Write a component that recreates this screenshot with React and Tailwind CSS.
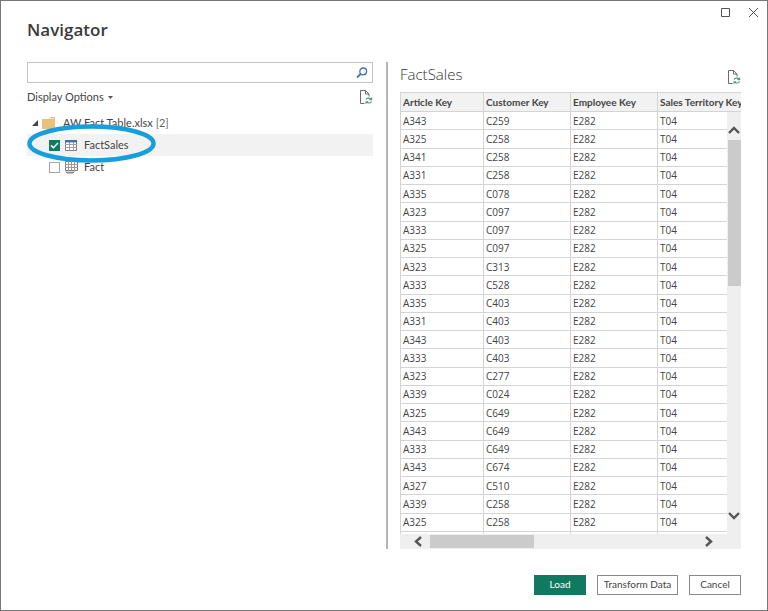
import React, { useState } from 'react';

const COLUMNS = ['Article Key', 'Customer Key', 'Employee Key', 'Sales Territory Key'];

const ROWS = [
  ['A343', 'C259'],
  ['A325', 'C258'],
  ['A341', 'C258'],
  ['A331', 'C258'],
  ['A335', 'C078'],
  ['A323', 'C097'],
  ['A333', 'C097'],
  ['A325', 'C097'],
  ['A323', 'C313'],
  ['A333', 'C528'],
  ['A335', 'C403'],
  ['A331', 'C403'],
  ['A343', 'C403'],
  ['A333', 'C403'],
  ['A323', 'C277'],
  ['A339', 'C024'],
  ['A325', 'C649'],
  ['A343', 'C649'],
  ['A333', 'C649'],
  ['A343', 'C674'],
  ['A327', 'C510'],
  ['A339', 'C258'],
  ['A325', 'C258'],
  ['', ''],
].map(([article, customer]) => (article ? [article, customer, 'E282', 'T04'] : ['', '', '', '']));

const RefreshIcon = () => (
  <svg width="14" height="15" viewBox="0 0 14 15" fill="none" aria-hidden="true">
    <path d="M5.5 13.5H1.500V.5h5L10 4v2.5" stroke="#6a6a6a" />
    <path d="M6.5.5V4H10" stroke="#6a6a6a" />
    <path d="M7 9.6C7.6 8 10.6 7.4 12 9.2M12.6 7.6v2h-2.2" stroke="#4f9a7e" strokeWidth="1.1" />
    <path d="M12.6 11.4c-.6 1.7-3.7 2.2-5 .5M7 13.7v-2h2.2" stroke="#4f9a7e" strokeWidth="1.1" />
  </svg>
);

const SearchIcon = () => (
  <svg width="12" height="12" viewBox="0 0 12 12" fill="none" aria-hidden="true">
    <circle cx="7.2" cy="4.4" r="3.4" stroke="#4573ad" strokeWidth="1.3" />
    <path d="M4.7 6.9L1 10.6" stroke="#4573ad" strokeWidth="2" />
  </svg>
);

const TableIcon = () => (
  <svg width="12" height="11" viewBox="0 0 12 11" fill="none" aria-hidden="true">
    <path d="M.5.5h11v10H.5z" fill="#fff" stroke="#7d7d7d" />
    <path d="M4.5 2v8.5M8.5 2v8.5M0 4.500h12M0 7.500h12" stroke="#a0a0a0" />
    <path d="M0 0h12v2.4H0z" fill="#3f6ea8" />
  </svg>
);

const SheetIcon = () => (
  <svg width="13" height="13" viewBox="0 0 13 13" fill="none" aria-hidden="true">
    <path d="M.5.5h12v9H.5z" stroke="#7a7a7a" />
    <path d="M3.5 0v10M6.5 0v10M9.5 0v10M0 3.5h13M0 6.500h13" stroke="#999" />
    <path d="M1 10.500l1 1.500h6l1.500-1.500" fill="#aaa" stroke="#7a7a7a" />
  </svg>
);

const Chevron = ({ d, wide }) => (
  <svg width={wide ? 12 : 8} height={wide ? 8 : 11} viewBox={wide ? '0 0 12 8' : '0 0 8 11'} fill="none" aria-hidden="true">
    <path d={d} stroke="#555" strokeWidth="2.4" />
  </svg>
);

function TreeItem({ label, icon, checked, onChange, highlighted }) {
  return (
    <li className={`relative flex h-[22px] items-center pl-[22px] ${highlighted ? 'bg-[#f2f2f2]' : ''}`}>
      <label className="flex items-center text-[11px]">
        <input type="checkbox" checked={checked} onChange={onChange} className="peer sr-only" />
        <span className="flex size-[11px] items-center justify-center border border-[#a6a6a6] bg-white peer-checked:border-[#11795f] peer-checked:bg-[#11795f]">
          {checked && (
            <svg width="9" height="9" viewBox="0 0 9 9" fill="none" aria-hidden="true">
              <path d="M1 4.4l2.4 2.4L8 2" stroke="#fff" strokeWidth="1.5" />
            </svg>
          )}
        </span>
        <span className="ml-[3px] flex w-4 justify-center">{icon}</span>
        <span className="ml-[5px]">{label}</span>
      </label>
      {highlighted && (
        <svg className="pointer-events-none absolute -top-2.5 left-0" width="130" height="39" viewBox="0 0 130 39" fill="none" aria-hidden="true">
          <ellipse cx="64.5" cy="19.5" rx="62" ry="17" stroke="#169fdb" strokeWidth="4.5" />
        </svg>
      )}
    </li>
  );
}

function SourcePanel() {
  const [selected, setSelected] = useState({ FactSales: true, Fact: false });
  const toggle = (name) => setSelected((prev) => ({ ...prev, [name]: !prev[name] }));

  return (
    <section className="mr-[13px] min-w-0">
      <div className="flex h-[21px] items-center border border-[#c3c3c3] pr-1">
        <input type="text" aria-label="Search" className="h-full min-w-0 flex-1 px-1 text-[11px] outline-none" />
        <button type="button" aria-label="Search"><SearchIcon /></button>
      </div>
      <div className="mt-1 flex h-5 items-center justify-between">
        <button type="button" className="flex items-center gap-1 text-[11px]">
          Display Options
          <svg width="5" height="3" viewBox="0 0 5 3" aria-hidden="true"><path d="M0 0h5L2.5 3z" fill="#555" /></svg>
        </button>
        <button type="button" aria-label="Refresh"><RefreshIcon /></button>
      </div>
      <div className="mt-[5px] flex h-[22px] items-center pl-[5px] text-[11px]">
        <svg width="6" height="6" viewBox="0 0 6 6" aria-hidden="true"><path d="M6 0v6H0z" fill="#444" /></svg>
        <svg className="ml-1" width="13" height="12" viewBox="0 0 13 12" aria-hidden="true">
          <path d="M0 2h7l1.5-2H13v12H0z" fill="#e9c07c" />
          <path d="M8 1.5h4" stroke="#f6e2bd" />
        </svg>
        <span className="ml-2">AW Fact Table.xlsx <span className="text-[#666]">[2]</span></span>
      </div>
      <ul>
        <TreeItem label="FactSales" icon={<TableIcon />} checked={selected.FactSales} onChange={() => toggle('FactSales')} highlighted />
        <TreeItem label="Fact" icon={<SheetIcon />} checked={selected.Fact} onChange={() => toggle('Fact')} />
      </ul>
    </section>
  );
}

function PreviewPanel() {
  return (
    <section className="flex min-h-0 min-w-0 flex-col border-l-2 border-[#b5b5b5] pl-3">
      <div className="flex h-[30px] items-center justify-between">
        <h2 className="pb-1.5 font-['Open_Sans',sans-serif] text-[15px] font-light text-[#333]">FactSales</h2>
        <button type="button" aria-label="Refresh preview"><RefreshIcon /></button>
      </div>
      <div className="relative min-h-0 flex-1 overflow-hidden">
        <table className="h-[458px] w-[347px] table-fixed border-collapse text-left text-[10px] leading-3">
          <colgroup>
            <col className="w-[83px]" />
            <col className="w-[87px]" />
            <col className="w-[87px]" />
            <col className="w-[90px]" />
          </colgroup>
          <thead>
            <tr className="bg-[#f2f2f2]">
              {COLUMNS.map((name) => (
                <th key={name} className="h-[19px] border border-[#d4d4d4] px-0.5 font-bold whitespace-nowrap">{name}</th>
              ))}
            </tr>
          </thead>
          <tbody className="font-['Open_Sans',sans-serif]">
            {ROWS.map((row, i) => (
              <tr key={i}>
                {row.map((value, j) => (
                  <td key={j} className="h-[18px] border border-[#d4d4d4] px-0.5">{value}</td>
                ))}
              </tr>
            ))}
          </tbody>
        </table>
        <div className="absolute top-5 right-0 bottom-0 flex w-3.5 flex-col items-center bg-[#efefef] py-3.5">
          <button type="button" aria-label="Scroll up"><Chevron wide d="M1 7l5-5 5 5" /></button>
          <div className="mt-1.5 h-[146px] w-[13px] bg-[#cbcbcb]" />
          <button type="button" aria-label="Scroll down" className="mt-auto"><Chevron wide d="M1 1l5 5 5-5" /></button>
        </div>
      </div>
      <div className="flex h-[15px] items-center bg-[#efefef] pr-7 pl-3.5">
        <button type="button" aria-label="Scroll left"><Chevron d="M7 1L2 5.5 7 10" /></button>
        <div className="ml-2 h-[13px] w-[104px] bg-[#cbcbcb]" />
        <button type="button" aria-label="Scroll right" className="ml-auto"><Chevron d="M1 1l5 4.500L1 10" /></button>
      </div>
    </section>
  );
}

export default function App() {
  return (
    <div className="flex h-screen flex-col border border-[#767676] bg-white px-[26px] font-['Lato','Open_Sans',sans-serif] text-[#444]">
      <header className="flex h-[61px] items-start justify-between">
        <h1 className="pt-[17px] font-['Open_Sans',sans-serif] text-[17px] leading-6 font-semibold text-[#3a3a3a]">Navigator</h1>
        <div className="-mr-[18px] flex gap-[17px] pt-1.5">
          <button type="button" aria-label="Maximize">
            <svg width="11" height="11" viewBox="0 0 11 11" fill="none" aria-hidden="true"><path d="M1.500 1.500h8v8h-8z" stroke="#555" /></svg>
          </button>
          <button type="button" aria-label="Close">
            <svg width="11" height="11" viewBox="0 0 11 11" fill="none" aria-hidden="true"><path d="M1 1l9 9M10 1l-9 9" stroke="#555" /></svg>
          </button>
        </div>
      </header>
      <main className="grid min-h-0 flex-1 grid-cols-[359fr_355fr]">
        <SourcePanel />
        <PreviewPanel />
      </main>
      <footer className="flex h-[61px] items-center justify-end gap-[11px] pt-2.5 text-[10px]">
        <button type="button" className="h-5 w-[52px] bg-[#11795f] text-white">Load</button>
        <button type="button" className="h-5 w-[81px] border border-[#8a8a8a]">Transform Data</button>
        <button type="button" className="h-5 w-[52px] border border-[#8a8a8a]">Cancel</button>
      </footer>
    </div>
  );
}
